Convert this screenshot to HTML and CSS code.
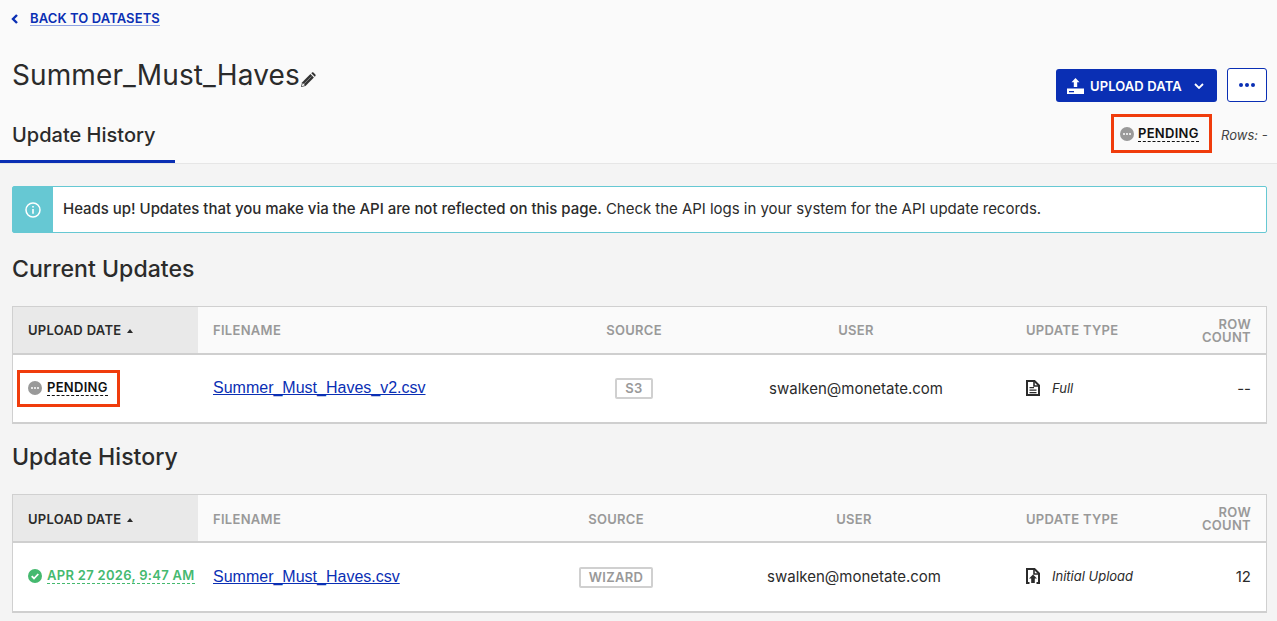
FILE: index.html
```html
<!DOCTYPE html>
<html lang="en">
<head>
<meta charset="utf-8">
<title>Summer_Must_Haves</title>
<link rel="stylesheet" href="styles.css">
</head>
<body>
<header class="page-head">
  <div class="back-row">
    <svg class="back-icon" viewBox="0 0 8 10"><path d="M6 1 2 5l4 4" fill="none" stroke="#0a2fb4" stroke-width="2.400"/></svg>
    <a class="back-link" href="#">BACK TO DATASETS</a>
  </div>
  <div class="title-row">
    <h1 class="title">Summer_Must_Haves</h1>
    <svg class="edit-icon" viewBox="0 0 16 16"><path d="M1 15l1-4.500 8.400-8.400 3.500 3.500L5.500 14z" fill="#333"/><path d="M11.300 1.200l.7-.6c.4-.4 1-.4 1.400 0l2 2c.4.4.4 1 0 1.400l-.6.7z" fill="#333"/><path d="M4 11.900l7.400-7.400" stroke="#999" stroke-width=".8" fill="none"/><path d="M1.800 14.200l1-3.200 2.200 2.200z" fill="#fafafa"/></svg>
    <div class="actions">
      <button class="btn-primary" type="button">
        <svg class="upload-icon" viewBox="0 0 17 16"><path d="M8.500 0l4 4.300H10.200V9H6.800V4.300H4.500z" fill="#fff"/><path d="M0 10.500h17V16H0z" fill="#fff"/><path d="M2 13h5v1.300H2z" fill="#0a2fb4"/></svg>
        <span>UPLOAD DATA</span>
        <svg class="chev-icon" viewBox="0 0 10 6"><path d="M1 1l4 4 4-4" fill="none" stroke="#fff" stroke-width="1.800"/></svg>
      </button>
      <button class="btn-more" type="button" aria-label="More"><i></i><i></i><i></i></button>
    </div>
  </div>
  <div class="tab-row">
    <div class="tab">Update History</div>
    <div class="tab-status">
      <div class="callout callout-head">
        <span class="dot-icon"><i></i><i></i><i></i></span>
        <span class="status-text">PENDING</span>
      </div>
      <span class="rows">Rows: -</span>
    </div>
  </div>
</header>
<main class="content">
  <div class="notice">
    <div class="notice-icon">
      <svg viewBox="0 0 16 16"><circle cx="8" cy="8" r="7" fill="none" stroke="#fff" stroke-width="1.500"/><path d="M7.200 7h1.600v4.800H7.200zM7.200 4h1.600v1.600H7.200z" fill="#fff"/></svg>
    </div>
    <p class="notice-text"><b>Heads up! Updates that you make via the API are not reflected on this page.</b> Check the API logs in your system for the API update records.</p>
  </div>

  <h2 class="section-title first">Current Updates</h2>
  <table class="grid grid-current">
    <colgroup><col class="c1"><col class="c2"><col class="c3"><col class="c4"><col class="c5"><col class="c6"></colgroup>
    <thead>
      <tr>
        <th class="sorted">UPLOAD DATE <span class="caret"></span></th>
        <th>FILENAME</th>
        <th class="center">SOURCE</th>
        <th class="center">USER</th>
        <th>UPDATE TYPE</th>
        <th class="right">ROW<br>COUNT</th>
      </tr>
    </thead>
    <tbody>
      <tr>
        <td class="status-cell">
          <div class="callout callout-cell">
            <span class="dot-icon"><i></i><i></i><i></i></span>
            <span class="status-text">PENDING</span>
          </div>
        </td>
        <td><a class="file" href="#">Summer_Must_Haves_v2.csv</a></td>
        <td class="center"><span class="tag">S3</span></td>
        <td class="center">swalken@monetate.com</td>
        <td>
          <div class="type">
            <svg class="type-icon" viewBox="0 0 14 16"><path d="M1 1h7.500L13 5.500V15H1z" fill="none" stroke="#2b2b2b" stroke-width="2"/><path d="M8 1v5h5" fill="none" stroke="#2b2b2b" stroke-width="1.600"/><path d="M3.500 7H8v1.300H3.500zM3.500 9.500h7v1.300h-7zM3.500 12h7v1.300h-7z" fill="#2b2b2b"/></svg>
            <em>Full</em>
          </div>
        </td>
        <td class="right">--</td>
      </tr>
    </tbody>
  </table>

  <h2 class="section-title">Update History</h2>
  <table class="grid grid-history">
    <colgroup><col class="c1"><col class="c2"><col class="c3"><col class="c4"><col class="c5"><col class="c6"></colgroup>
    <thead>
      <tr>
        <th class="sorted">UPLOAD DATE <span class="caret"></span></th>
        <th>FILENAME</th>
        <th class="center">SOURCE</th>
        <th class="center">USER</th>
        <th>UPDATE TYPE</th>
        <th class="right">ROW<br>COUNT</th>
      </tr>
    </thead>
    <tbody>
      <tr>
        <td class="status-cell">
          <div class="done">
            <svg class="check-icon" viewBox="0 0 14 14"><circle cx="7" cy="7" r="7" fill="#45b96f"/><path d="M3.700 7.200l2.300 2.300 4.300-4.500" fill="none" stroke="#fff" stroke-width="1.800"/></svg>
            <span class="done-text">APR 27 2026, 9:47 AM</span>
          </div>
        </td>
        <td><a class="file" href="#">Summer_Must_Haves.csv</a></td>
        <td class="center"><span class="tag">WIZARD</span></td>
        <td class="center lift">swalken@monetate.com</td>
        <td>
          <div class="type">
            <svg class="type-icon" viewBox="0 0 14 16"><path d="M3.500 15H1V1h7.500L13 5.500V15h-2.500" fill="none" stroke="#2b2b2b" stroke-width="2"/><path d="M8 1v5h5" fill="none" stroke="#2b2b2b" stroke-width="1.600"/><path d="M7 6.500l4 4H8.800V15H5.200v-4.500H3z" fill="#2b2b2b"/></svg>
            <em>Initial Upload</em>
          </div>
        </td>
        <td class="right count lift">12</td>
      </tr>
    </tbody>
  </table>
</main>
</body>
</html>
```
FILE: styles.css
```css
* { box-sizing: border-box; }
html, body { margin: 0; }
body {
  background: #f4f4f4;
  color: #2b2b2b;
  font-family: Inter, "Liberation Sans", sans-serif;
  font-size: 15px;
  height: 621px;
  overflow: hidden;
}
.page-head {
  background: #fafafa;
  border-bottom: 1px solid #e6e6e6;
  height: 164px;
  padding-top: 11px;
  display: flex;
  flex-direction: column;
}
.back-row {
  display: flex;
  align-items: center;
  gap: 11px;
  padding-left: 11px;
  height: 15px;
}
.back-icon { width: 8px; height: 10px; }
.back-link {
  color: #0a2fb4;
  font-size: 13px;
  font-weight: 600;
  letter-spacing: .1px;
  line-height: 14px;
  text-decoration: none;
  border-bottom: 1px solid #8fa3e3;
}
.title-row {
  display: flex;
  align-items: flex-start;
  padding: 32px 10px 0 12px;
  height: 83px;
}
.title {
  margin: 0;
  font-size: 28px;
  font-weight: 400;
  letter-spacing: .1px;
  line-height: 34px;
}
.edit-icon { width: 16px; height: 16px; margin-top: 14px; }
.actions {
  margin-left: auto;
  display: flex;
  gap: 10px;
  margin-top: 11px;
}
.btn-primary {
  display: flex;
  align-items: center;
  width: 161px;
  height: 33px;
  padding: 0 0 0 11px;
  background: #0a2fb4;
  border: 0;
  border-radius: 3px;
  color: #fff;
  font: 600 13px Inter, "Liberation Sans", sans-serif;
  letter-spacing: .1px;
}
.upload-icon { width: 17px; height: 16px; margin-right: 6px; margin-top: 1px; }
.chev-icon { width: 10px; height: 6px; margin-left: 12px; }
.btn-more {
  display: flex;
  align-items: center;
  justify-content: center;
  gap: 2px;
  width: 40px;
  height: 34px;
  margin-top: -1px;
  background: #fff;
  border: 1px solid #0a2fb4;
  border-radius: 3px;
}
.btn-more i { width: 4px; height: 4px; border-radius: 50%; background: #0a2fb4; }
.tab-row {
  display: flex;
  justify-content: space-between;
  align-items: flex-start;
  flex: 1;
  padding-right: 10px;
}
.tab {
  width: 175px;
  height: 46px;
  margin-top: 9px;
  padding: 4px 0 0 12px;
  font-size: 20px;
  font-weight: 500;
  line-height: 28px;
  border-bottom: 3px solid #0a2fb4;
}
.tab-status { display: flex; align-items: center; margin-top: 6px; }
.callout {
  display: flex;
  align-items: center;
  gap: 5px;
  border: 3px solid #f03c0c;
  background: #fff;
}
.callout-head { width: 101px; height: 39px; padding-left: 6px; margin-right: 9px; gap: 4px; background: transparent; }
.callout-cell { width: 103px; height: 37px; padding: 0 0 2px 8px; }
.dot-icon {
  display: flex;
  align-items: center;
  justify-content: center;
  gap: 1px;
  width: 14px;
  height: 14px;
  border-radius: 50%;
  background: #999;
}
.dot-icon i { width: 2px; height: 2px; border-radius: 50%; background: #fff; }
.status-text {
  color: #111;
  font-size: 13px;
  font-weight: 600;
  line-height: 15px;
  letter-spacing: .3px;
  border-bottom: 1px dashed #111;
}
.rows { margin-top: 2px; width: 46px; white-space: nowrap; font-size: 13px; font-style: italic; color: #444; }
.content { padding: 22px 10px 0 12px; }
.notice {
  display: flex;
  align-items: stretch;
  height: 47px;
  background: #fff;
  border: 1px solid #66c8d3;
  border-radius: 2px;
}
.notice-icon {
  display: flex;
  align-items: center;
  justify-content: center;
  width: 40px;
  background: #66c8d3;
}
.notice-icon svg { width: 16px; height: 16px; }
.notice-text { margin: 0; padding-left: 10px; font-size: 15px; letter-spacing: -.03px; line-height: 43px; }
.notice-text b { font-weight: 500; }
.section-title {
  margin: 0;
  padding-top: 17px;
  font-size: 23.1px;
  font-weight: 500;
  line-height: 32px;
  height: 70px;
}
.section-title.first { height: 73px; padding-top: 20px; }
.grid {
  width: 1255px;
  border-collapse: separate;
  border-spacing: 0;
  table-layout: fixed;
  background: #fff;
  border: 1px solid #d0d0d0;
  border-bottom: 2px solid #cfcfcf;
}
.grid th {
  height: 48px;
  padding: 0 15px;
  background: #fafafa;
  border-bottom: 2px solid #cfcfcf;
  color: #999;
  font-size: 13px;
  font-weight: 600;
  line-height: 13px;
  letter-spacing: .3px;
  text-align: left;
}
.grid th.right { padding-top: 2px; }
.grid-history th { padding-top: 2px; }
.grid th.sorted { background: #e9e9e9; color: #2b2b2b; }
.grid td { height: 67px; padding: 0 15px; font-size: 15px; }
.grid-history td { height: 68px; }
.grid td.lift { padding-bottom: 2px; }
.grid td.status-cell { padding: 0 0 0 4px; }
.grid .center { text-align: center; }
.grid .right { text-align: right; }
.grid-current .c1, .grid-history .c1 { width: 185px; }
.grid-current .c2 { width: 369px; }
.grid-current .c3 { width: 134px; }
.grid-current .c4 { width: 310px; }
.grid-history .c2 { width: 337px; }
.grid-history .c3 { width: 162px; }
.grid-history .c4 { width: 314px; }
.c5 { width: 175px; }
.caret {
  display: inline-block;
  width: 0;
  height: 0;
  margin: 0 0 2px 2px;
  border-left: 3px solid transparent;
  border-right: 3px solid transparent;
  border-bottom: 4px solid #2b2b2b;
}
.file { display: inline-block; margin-bottom: 2px; color: #0a2fb4; font-family: "Liberation Sans", Arial, sans-serif; font-size: 16px; }
.tag {
  display: inline-block;
  padding: 0 8px;
  border: 2px solid #d0d0d0;
  border-radius: 2px;
  color: #999;
  font-size: 13px;
  font-weight: 600;
  line-height: 17px;
  letter-spacing: .3px;
}
.type { display: flex; align-items: center; gap: 12px; margin-top: -2px; }
.type-icon { width: 14px; height: 16px; }
.type em { font-size: 13px; }
.count { font-size: 17px; }
.done { display: flex; align-items: center; gap: 5px; padding-left: 11px; margin-top: -3px; }
.check-icon { width: 14px; height: 14px; }
.done-text {
  color: #45b96f;
  font-size: 13px;
  font-weight: 600;
  line-height: 15px;
  letter-spacing: .3px;
  border-bottom: 1px dashed #45b96f;
}
```
